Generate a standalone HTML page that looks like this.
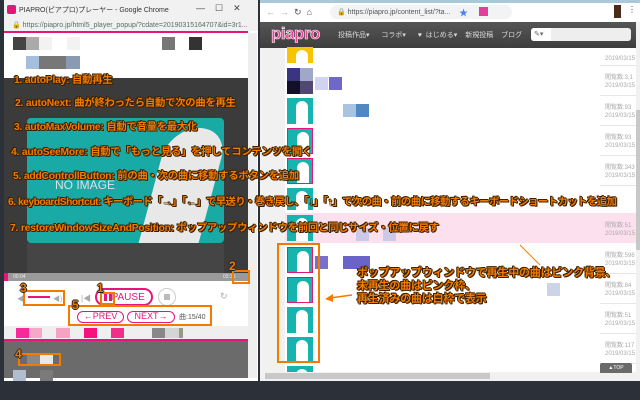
<!DOCTYPE html>
<html><head><meta charset="utf-8"><style>
*{margin:0;padding:0;box-sizing:border-box}
body{width:640px;height:400px;overflow:hidden;background:#2c3038;position:relative;font-family:"Liberation Sans","Noto Sans CJK JP",sans-serif}
.a{position:absolute}
.o{position:absolute;color:#f27a00;font-weight:bold;font-size:10.3px;white-space:nowrap;letter-spacing:-0.2px;
text-shadow:-1px 0 #3a2000,1px 0 #3a2000,0 -1px #3a2000,0 1px #3a2000,1px 1px #3a2000,-1px -1px #3a2000}
.box{position:absolute;border:2px solid #f27a00}
.num{position:absolute;color:#f27a00;font-weight:bold;font-size:12px;text-shadow:-1px 0 #222,1px 0 #222,0 1px #222,0 -1px #222}
.th{position:absolute;left:287px;width:26px;height:26px;background:#17b3ae;overflow:hidden}
.th i{position:absolute;left:9px;top:3px;width:12px;height:23px;background:#fff;border-radius:6px 6px 0 0}
.meta{position:absolute;left:605px;font-size:6px;color:#aaa;line-height:8px}
.pill{position:absolute;border:1.5px solid #e5157a;border-radius:10px;color:#e5157a;font-size:9px;text-align:center}
</style></head><body>

<!-- LEFT WINDOW -->
<div class="a" style="left:4px;top:0;width:254px;height:381px;background:#fff"></div>
<div class="a" style="left:4px;top:0;width:254px;height:20px;background:#f1f1f1"></div>
<div class="a" style="left:7px;top:5px;width:9px;height:9px;background:#e5157a;border-radius:2px"></div>
<div class="a" style="left:19px;top:5px;font-size:7px;color:#333">PIAPRO(ピアプロ)プレーヤー - Google Chrome</div>
<div class="a" style="left:196px;top:3px;font-size:9px;color:#444">—&nbsp;&nbsp;&nbsp;&nbsp;☐&nbsp;&nbsp;&nbsp;&nbsp;✕</div>
<div class="a" style="left:4px;top:20px;width:254px;height:11px;background:#f1f1f1"></div>
<div class="a" style="left:12px;top:21px;font-size:7px;color:#666">🔒 https://piapro.jp/html5_player_popup/?cdate=20190315164707&amp;id=3r1...</div>
<div class="a" style="left:4px;top:31px;width:244px;height:2px;background:#e5157a"></div>
<div class="a" style="left:248px;top:33px;width:9px;height:345px;background:#eee"></div>
<div class="a" style="left:13px;top:37px;width:13px;height:13px;background:#444"></div>
<div class="a" style="left:26px;top:37px;width:13px;height:13px;background:#aaa"></div>
<div class="a" style="left:39px;top:37px;width:13px;height:13px;background:#f2f2f2"></div>
<div class="a" style="left:67px;top:37px;width:13px;height:13px;background:#f2f2f2"></div>
<div class="a" style="left:162px;top:37px;width:13px;height:13px;background:#777"></div>
<div class="a" style="left:189px;top:37px;width:13px;height:13px;background:#333"></div>
<div class="a" style="left:26px;top:56px;width:13px;height:13px;background:#a5bedb"></div>
<div class="a" style="left:39px;top:56px;width:27px;height:13px;background:#777"></div>
<div class="a" style="left:66px;top:56px;width:14px;height:13px;background:#8a9ab0"></div>
<div class="a" style="left:4px;top:78px;width:244px;height:195px;background:#3b3b3b"></div>
<div class="a" style="left:27px;top:118px;width:197px;height:125px;background:#19aaa6;border-radius:4px;overflow:hidden">
 <div class="a" style="left:125px;top:10px;width:60px;height:130px;background:#e8e8e8;border-radius:30px 30px 0 0;transform:skewX(-15deg)"></div>
 <div class="a" style="left:28px;top:60px;font-size:12px;color:#e0e0e0">NO IMAGE</div>
</div>
<div class="a" style="left:27px;top:243px;width:197px;height:30px;background:#454545"></div>
<div class="a" style="left:4px;top:273px;width:244px;height:8px;background:#9a9a9a"></div>
<div class="a" style="left:4px;top:273px;width:4px;height:8px;background:#e5157a"></div>
<div class="a" style="left:13px;top:274px;font-size:5px;color:#eee">00:04</div>
<div class="a" style="left:223px;top:274px;font-size:5px;color:#eee">03:36</div>
<!-- controls -->
<div class="a" style="left:17px;top:294px;font-size:7px;color:#aaa">◀</div>
<div class="a" style="left:28px;top:296px;width:22px;height:2px;background:#e5157a"></div>
<div class="a" style="left:53px;top:294px;font-size:7px;color:#aaa">◀)</div>
<div class="a" style="left:81px;top:293px;font-size:8px;color:#aaa">|◀</div>
<div class="pill" style="left:95px;top:288px;width:58px;height:18px;line-height:15px;font-size:10px;border-width:2px">&nbsp;&nbsp;&nbsp;PAUSE</div>
<div class="a" style="left:104px;top:293px;width:3px;height:8px;background:#e5157a"></div>
<div class="a" style="left:109px;top:293px;width:3px;height:8px;background:#e5157a"></div>
<div class="a" style="left:158px;top:288px;width:18px;height:18px;border:1.5px solid #ccc;border-radius:50%"></div>
<div class="a" style="left:164px;top:294px;width:6px;height:6px;background:#bbb"></div>
<div class="a" style="left:220px;top:291px;font-size:9px;color:#aaa">↻</div>
<div class="pill" style="left:77px;top:311px;width:47px;height:12px;line-height:9px">←PREV</div>
<div class="pill" style="left:127px;top:311px;width:48px;height:12px;line-height:9px">NEXT→</div>
<div class="a" style="left:179px;top:312px;font-size:7px;color:#555">曲:15/40</div>
<div class="a" style="left:4px;top:326px;width:244px;height:14px;background:#efefef"></div>
<div class="a" style="left:16px;top:328px;width:13px;height:10px;background:#f72a9a"></div>
<div class="a" style="left:29px;top:328px;width:13px;height:10px;background:#f5a8c8"></div>
<div class="a" style="left:56px;top:328px;width:14px;height:10px;background:#f4a3c4"></div>
<div class="a" style="left:84px;top:328px;width:13px;height:10px;background:#f7117f"></div>
<div class="a" style="left:111px;top:328px;width:13px;height:10px;background:#f03088"></div>
<div class="a" style="left:152px;top:328px;width:13px;height:10px;background:#888"></div>
<div class="a" style="left:165px;top:328px;width:14px;height:10px;background:#d5d5d5"></div>
<div class="a" style="left:179px;top:328px;width:4px;height:10px;background:#998"></div>
<div class="a" style="left:4px;top:339px;width:244px;height:2px;background:#e5157a"></div>
<div class="a" style="left:4px;top:341px;width:244px;height:37px;background:#6b6b6b"></div>
<div class="a" style="left:27px;top:353px;width:13px;height:12px;background:#888"></div>
<div class="a" style="left:40px;top:353px;width:13px;height:12px;background:#e8e8e8"></div>
<div class="a" style="left:13px;top:370px;width:13px;height:11px;background:#b0bcd0"></div>
<div class="a" style="left:40px;top:370px;width:13px;height:11px;background:#7a7a7a"></div>

<!-- RIGHT WINDOW -->
<div class="a" style="left:260px;top:0;width:380px;height:381px;background:#fff"></div>
<div class="a" style="left:260px;top:0;width:380px;height:3px;background:#a9c8d8"></div>
<div class="a" style="left:266px;top:7px;font-size:9px;color:#aaa">←&nbsp;&nbsp;→&nbsp;&nbsp;<span style="color:#555">↻&nbsp;&nbsp;⌂</span></div>
<div class="a" style="left:330px;top:5px;width:182px;height:14px;background:#f1f3f4;border-radius:7px"></div>
<div class="a" style="left:337px;top:8px;font-size:7px;color:#555">🔒 https://piapro.jp/content_list/?ta...</div>
<div class="a" style="left:459px;top:6px;font-size:9px;color:#4a80f0">★</div>
<div class="a" style="left:479px;top:7px;width:9px;height:9px;background:#e0409a"></div>
<div class="a" style="left:614px;top:5px;width:7px;height:13px;background:#4a2a18"></div>
<div class="a" style="left:628px;top:5px;font-size:8px;color:#333">⋮</div>
<div class="a" style="left:260px;top:22px;width:380px;height:26px;background:linear-gradient(#555,#3e3e3e)"></div>
<div class="a" style="left:271px;top:24px;font-size:17px;font-weight:bold;color:#f0409a;letter-spacing:-0.5px;-webkit-text-stroke:0.6px #fff">piapro</div>
<div class="a" style="left:338px;top:30px;font-size:7px;color:#ddd;word-spacing:2px">投稿作品▾&nbsp;&nbsp; コラボ▾&nbsp;&nbsp; ♥ はじめる▾&nbsp; 新規投稿&nbsp;&nbsp;ブログ</div>
<div class="a" style="left:531px;top:28px;width:100px;height:13px;background:#eee;border-radius:3px"></div>
<div class="a" style="left:531px;top:28px;width:20px;height:13px;background:#fff;border-radius:3px 0 0 3px;font-size:7px;color:#666;padding:2px 3px">✎▾</div>
<div class="a" style="left:260px;top:48px;width:25px;height:324px;background:#f1f1f1"></div>
<div class="a" style="left:636px;top:22px;width:4px;height:350px;background:#f1f1f1"></div>
<div class="a" style="left:636px;top:110px;width:4px;height:140px;background:#c8c8c8"></div>
<div class="a" style="left:260px;top:372px;width:380px;height:9px;background:#f1f1f1"></div>
<div class="a" style="left:265px;top:373px;width:225px;height:6px;background:#c8c8c8"></div>
<div class="a" style="left:285px;top:213px;width:351px;height:30px;background:#fce0ee"></div>
<div class="a" style="left:600px;top:65px;width:36px;height:1px;background:#e6e6e6"></div>
<div class="a" style="left:600px;top:95px;width:36px;height:1px;background:#e6e6e6"></div>
<div class="a" style="left:600px;top:125px;width:36px;height:1px;background:#e6e6e6"></div>
<div class="a" style="left:600px;top:155px;width:36px;height:1px;background:#e6e6e6"></div>
<div class="a" style="left:600px;top:185px;width:36px;height:1px;background:#e6e6e6"></div>
<div class="a" style="left:600px;top:273px;width:36px;height:1px;background:#e6e6e6"></div>
<div class="a" style="left:600px;top:303px;width:36px;height:1px;background:#e6e6e6"></div>
<div class="a" style="left:600px;top:333px;width:36px;height:1px;background:#e6e6e6"></div>
<div class="a" style="left:600px;top:363px;width:36px;height:1px;background:#e6e6e6"></div>
<div class="th" style="top:47px;height:16px;background:#f8c400"><i></i></div>
<div class="a" style="left:287px;top:68px;width:13px;height:13px;background:#3a3580"></div>
<div class="a" style="left:300px;top:68px;width:13px;height:13px;background:#a0a8c8"></div>
<div class="a" style="left:287px;top:81px;width:13px;height:13px;background:#121028"></div>
<div class="a" style="left:300px;top:81px;width:13px;height:13px;background:#504870"></div>
<div class="a" style="left:315px;top:77px;width:13px;height:13px;background:#d0d4f0"></div>
<div class="a" style="left:329px;top:77px;width:13px;height:13px;background:#7068c8"></div>
<div class="th" style="top:98px"><i></i></div>
<div class="a" style="left:343px;top:104px;width:13px;height:13px;background:#a8c4e0"></div>
<div class="a" style="left:356px;top:104px;width:13px;height:13px;background:#5088c0"></div>
<div class="th" style="top:128px;border:1.5px solid #e5157a"><i></i></div>
<div class="th" style="top:158px;border:1.5px solid #e5157a"><i></i></div>
<div class="th" style="top:188px;height:22px"><i></i></div>
<div class="th" style="top:215px"><i></i></div>
<div class="th" style="top:247px;border:1.5px solid #e5157a"><i></i></div>
<div class="th" style="top:277px;border:1.5px solid #e5157a"><i></i></div>
<div class="th" style="top:307px"><i></i></div>
<div class="th" style="top:337px"><i></i></div>
<div class="th" style="top:366px;height:6px"><i></i></div>
<div class="a" style="left:315px;top:256px;width:13px;height:13px;background:#7a70cc"></div>
<div class="a" style="left:343px;top:256px;width:27px;height:13px;background:#6a64c8"></div>
<div class="a" style="left:356px;top:228px;width:13px;height:13px;background:#ccc8e8"></div>
<div class="a" style="left:383px;top:228px;width:13px;height:13px;background:#ccc8e8"></div>
<div class="a" style="left:547px;top:283px;width:13px;height:13px;background:#ccd4e8"></div>
<div class="meta" style="top:47px"><br>2019/03/15</div>
<div class="meta" style="top:74px">閲覧数:3,1<br>2019/03/15</div>
<div class="meta" style="top:104px">閲覧数:93<br>2019/03/15</div>
<div class="meta" style="top:134px">閲覧数:93<br>2019/03/15</div>
<div class="meta" style="top:164px">閲覧数:343<br>2019/03/15</div>
<div class="meta" style="top:222px">閲覧数:51<br>2019/03/15</div>
<div class="meta" style="top:252px">閲覧数:596<br>2019/03/15</div>
<div class="meta" style="top:282px">閲覧数:84<br>2019/03/15</div>
<div class="meta" style="top:312px">閲覧数:51<br>2019/03/15</div>
<div class="meta" style="top:342px">閲覧数:117<br>2019/03/15</div>
<div class="a" style="left:600px;top:363px;width:32px;height:10px;background:#6a6a6a;border-radius:2px 2px 0 0;color:#fff;font-size:5px;text-align:center;line-height:10px">▲TOP</div>

<!-- ANNOTATIONS -->
<div class="o" style="left:14px;top:71px">1. autoPlay: 自動再生</div>
<div class="o" style="left:15px;top:94px">2. autoNext: 曲が終わったら自動で次の曲を再生</div>
<div class="o" style="left:14px;top:118px">3. autoMaxVolume: 自動で音量を最大化</div>
<div class="o" style="left:11px;top:143px">4. autoSeeMore: 自動で「もっと見る」を押してコンテンツを開く</div>
<div class="o" style="left:13px;top:167px">5. addControllButton: 前の曲・次の曲に移動するボタンを追加</div>
<div class="o" style="left:8px;top:193px;letter-spacing:-0.5px">6. keyboardShortcut: キーボード「→」「←」で早送り・巻き戻し、「↓」「↑」で次の曲・前の曲に移動するキーボードショートカットを追加</div>
<div class="o" style="left:10px;top:219px">7. restoreWindowSizeAndPosition: ポップアップウィンドウを前回と同じサイズ・位置に戻す</div>
<div class="o" style="left:357px;top:267px;line-height:13px;font-size:11px">ポップアップウィンドウで再生中の曲はピンク背景、<br>未再生の曲はピンク枠、<br>再生済みの曲は白枠で表示</div>

<div class="box" style="left:232px;top:270px;width:18px;height:14px"></div>
<div class="num" style="left:229px;top:259px">2</div>
<div class="box" style="left:23px;top:290px;width:42px;height:16px"></div>
<div class="num" style="left:20px;top:281px">3</div>
<div class="box" style="left:100px;top:292px;width:15px;height:13px"></div>
<div class="num" style="left:97px;top:281px">1</div>
<div class="box" style="left:68px;top:305px;width:144px;height:21px"></div>
<div class="num" style="left:72px;top:298px">5</div>
<div class="box" style="left:18px;top:353px;width:43px;height:13px"></div>
<div class="num" style="left:15px;top:347px">4</div>
<div class="box" style="left:277px;top:243px;width:43px;height:120px"></div>
<svg class="a" style="left:0;top:0" width="640" height="400">
<line x1="352" y1="295" x2="330" y2="298" stroke="#f27a00" stroke-width="1.5"/>
<polygon points="325,299 333,294 333,302" fill="#f27a00"/>
<line x1="540" y1="265" x2="520" y2="245" stroke="#f27a00" stroke-width="1"/>
</svg>
</body></html>
